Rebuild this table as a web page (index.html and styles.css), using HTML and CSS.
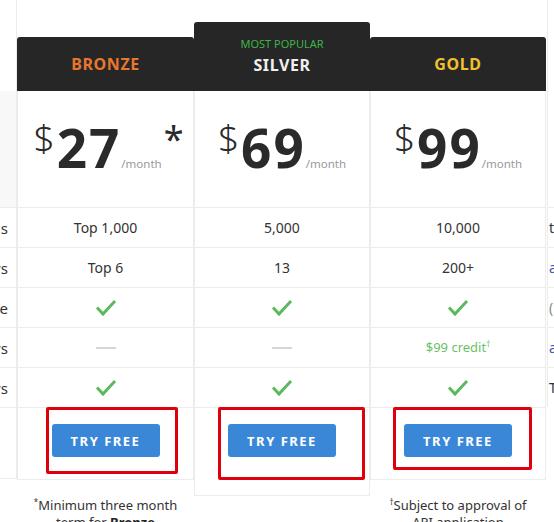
FILE: index.html
```html
<!DOCTYPE html>
<html lang="en">
<head>
<meta charset="utf-8">
<title>Pricing</title>
<link rel="stylesheet" href="styles.css">
</head>
<body>
<div class="pricing">
  <div class="labels">
    <div class="spacer"></div>
    <div class="label-price"></div>
    <div class="label-row"><span>Keywords</span></div>
    <div class="label-row"><span>Competitors</span></div>
    <div class="label-row"><span>Mobile &amp; desktop coverage</span></div>
    <div class="label-row"><span>Ad spend offers</span></div>
    <div class="label-row"><span>Team members</span></div>
    <div class="label-foot"></div>
  </div>

  <div class="plan">
    <div class="plan-head"><span class="plan-name bronze">BRONZE</span></div>
    <div class="plan-body">
      <div class="price-cell price-bronze">
        <span class="cur">$</span><span class="amt">27</span><span class="per">/month</span><span class="star">*</span>
      </div>
      <div class="row">Top 1,000</div>
      <div class="row">Top 6</div>
      <div class="row"><svg class="check" viewBox="0 0 22 17"><path d="M2 8.5 L8 15 L20 2"/></svg></div>
      <div class="row"><span class="dash"></span></div>
      <div class="row"><svg class="check" viewBox="0 0 22 17"><path d="M2 8.5 L8 15 L20 2"/></svg></div>
      <div class="btn-cell">
        <a class="btn">TRY FREE</a>
        <span class="mark mark-bronze"></span>
      </div>
    </div>
    <p class="note"><sup>*</sup>Minimum three month<br>term for <b>Bronze</b></p>
  </div>

  <div class="plan popular">
    <div class="plan-head">
      <span class="popular-tag">MOST POPULAR</span>
      <span class="plan-name silver">SILVER</span>
    </div>
    <div class="plan-body">
      <div class="price-cell">
        <span class="cur">$</span><span class="amt">69</span><span class="per">/month</span>
      </div>
      <div class="row">5,000</div>
      <div class="row">13</div>
      <div class="row"><svg class="check" viewBox="0 0 22 17"><path d="M2 8.5 L8 15 L20 2"/></svg></div>
      <div class="row"><span class="dash"></span></div>
      <div class="row"><svg class="check" viewBox="0 0 22 17"><path d="M2 8.5 L8 15 L20 2"/></svg></div>
      <div class="btn-cell tall">
        <a class="btn">TRY FREE</a>
        <span class="mark mark-silver"></span>
      </div>
    </div>
  </div>

  <div class="plan">
    <div class="plan-head"><span class="plan-name gold">GOLD</span></div>
    <div class="plan-body">
      <div class="price-cell">
        <span class="cur">$</span><span class="amt">99</span><span class="per">/month</span>
      </div>
      <div class="row">10,000</div>
      <div class="row">200+</div>
      <div class="row"><svg class="check" viewBox="0 0 22 17"><path d="M2 8.5 L8 15 L20 2"/></svg></div>
      <div class="row"><span class="credit">$99 credit<sup>†</sup></span></div>
      <div class="row"><svg class="check" viewBox="0 0 22 17"><path d="M2 8.5 L8 15 L20 2"/></svg></div>
      <div class="btn-cell">
        <a class="btn">TRY FREE</a>
        <span class="mark mark-gold"></span>
      </div>
    </div>
    <p class="note"><sup>†</sup>Subject to approval of<br>API application</p>
  </div>

  <div class="extra">
    <div class="spacer"></div>
    <div class="extra-price"></div>
    <div class="extra-row">top</div>
    <div class="extra-row link">all</div>
    <div class="extra-row muted">(incl.)</div>
    <div class="extra-row link">add</div>
    <div class="extra-row">Team</div>
  </div>
</div>
</body>
</html>
```

FILE: styles.css
```css
* { box-sizing: border-box; }

body {
  margin: 0;
  width: 554px;
  height: 522px;
  overflow: hidden;
  background: #fff;
  color: #333;
  font-family: "Noto Sans", "Open Sans", sans-serif;
}

.pricing {
  display: flex;
  align-items: flex-start;
}

/* left (clipped) label column */
.labels {
  width: 17px;
  flex: none;
  overflow: hidden;
  border-right: 1px solid #ececec;
}
.spacer { height: 91px; }
.label-price {
  height: 116px;
  background: #f8f8f8;
}
.label-row {
  height: 40px;
  border-top: 1px solid #ececec;
  display: flex;
  justify-content: flex-end;
  align-items: center;
  padding-right: 8px;
  white-space: nowrap;
  font-size: 15px;
  color: #333;
}
.label-foot {
  height: 72px;
  border-top: 1px solid #ececec;
  border-bottom: 1px solid #ececec;
}

/* plans */
.plan {
  width: 177px;
  flex: none;
}
.plan + .plan { width: 176px; }

.plan-head {
  margin-top: 37px;
  height: 54px;
  background: #262626;
  border-radius: 3px 3px 0 0;
  display: flex;
  flex-direction: column;
  align-items: center;
  justify-content: center;
}
.popular .plan-head {
  margin-top: 22px;
  height: 69px;
  justify-content: flex-start;
  padding-top: 15px;
}
.plan-name {
  font-size: 16px;
  font-weight: 700;
  letter-spacing: 0.6px;
  line-height: 20px;
}
.bronze { color: #e8772e; }
.silver { color: #f0f0f0; margin-top: 4px; }
.gold { color: #f2c02e; }
.popular-tag {
  font-size: 11px;
  line-height: 14px;
  color: #3db54a;
}

.plan-body {
  border-left: 1px solid #ececec;
  border-right: 1px solid #ececec;
  border-bottom: 1px solid #ececec;
}

.price-cell {
  height: 116px;
  padding-top: 30px;
  text-align: center;
  font-size: 53px;
  line-height: 53px;
  white-space: nowrap;
}
.price-bronze { padding-left: 6px; }
.cur {
  font-size: 37px;
  font-weight: 300;
  line-height: 0;
  vertical-align: 16px;
  margin-right: 2px;
  color: #2a2a2a;
}
.amt {
  font-size: 53px;
  font-weight: 700;
  color: #2a2a2a;
  letter-spacing: 2px;
}
.per {
  font-size: 11.5px;
  line-height: 0;
  color: #999;
}
.star {
  font-size: 36px;
  font-weight: 400;
  line-height: 0;
  vertical-align: 16px;
  margin-left: 2px;
  color: #2a2a2a;
}

.row {
  height: 40px;
  border-top: 1px solid #ececec;
  display: flex;
  align-items: center;
  justify-content: center;
  font-size: 14px;
  color: #333;
}
.check {
  width: 22px;
  height: 17px;
  fill: none;
  stroke: #5cb85c;
  stroke-width: 3;
}
.dash {
  width: 20px;
  height: 2px;
  background: #d6d6d6;
}
.credit {
  font-size: 13px;
  color: #6cbf6a;
}
.credit sup {
  font-size: 8px;
}

.btn-cell {
  position: relative;
  height: 72px;
  border-top: 1px solid #ececec;
  display: flex;
  justify-content: center;
  padding-top: 16px;
}
.btn-cell.tall { height: 88px; }
.btn {
  display: flex;
  align-items: center;
  justify-content: center;
  width: 108px;
  height: 33px;
  background: #3a87d8;
  border-radius: 3px;
  color: #fff;
  font-size: 13px;
  font-weight: 700;
  letter-spacing: 1.5px;
  text-decoration: none;
}

/* red annotation rectangles laid over the buttons */
.mark {
  position: absolute;
  border: 3px solid #e0000c;
  border-radius: 2px;
}
.mark-bronze { left: 28px; top: -1px; width: 132px; height: 67px; }
.mark-silver { left: 23px; top: -1px; width: 147px; height: 73px; }
.mark-gold { left: 22px; top: -1px; width: 139px; height: 63px; }

.note {
  margin: 13px 0 0;
  text-align: center;
  font-size: 13px;
  line-height: 17px;
  color: #333;
}
.note sup {
  font-size: 8px;
}
.note b { font-weight: 700; color: #222; }

/* right (clipped) column */
.extra {
  flex: 1;
  min-width: 0;
  overflow: hidden;
  margin-left: 1px;
  border-left: 1px solid #ececec;
}
.extra-price { height: 116px; }
.extra-row {
  height: 40px;
  border-top: 1px solid #ececec;
  display: flex;
  align-items: center;
  padding-left: 1px;
  white-space: nowrap;
  font-size: 14px;
  color: #333;
}
.extra-row.link { color: #3a5aa8; }
.extra-row.muted { color: #888; }
```
